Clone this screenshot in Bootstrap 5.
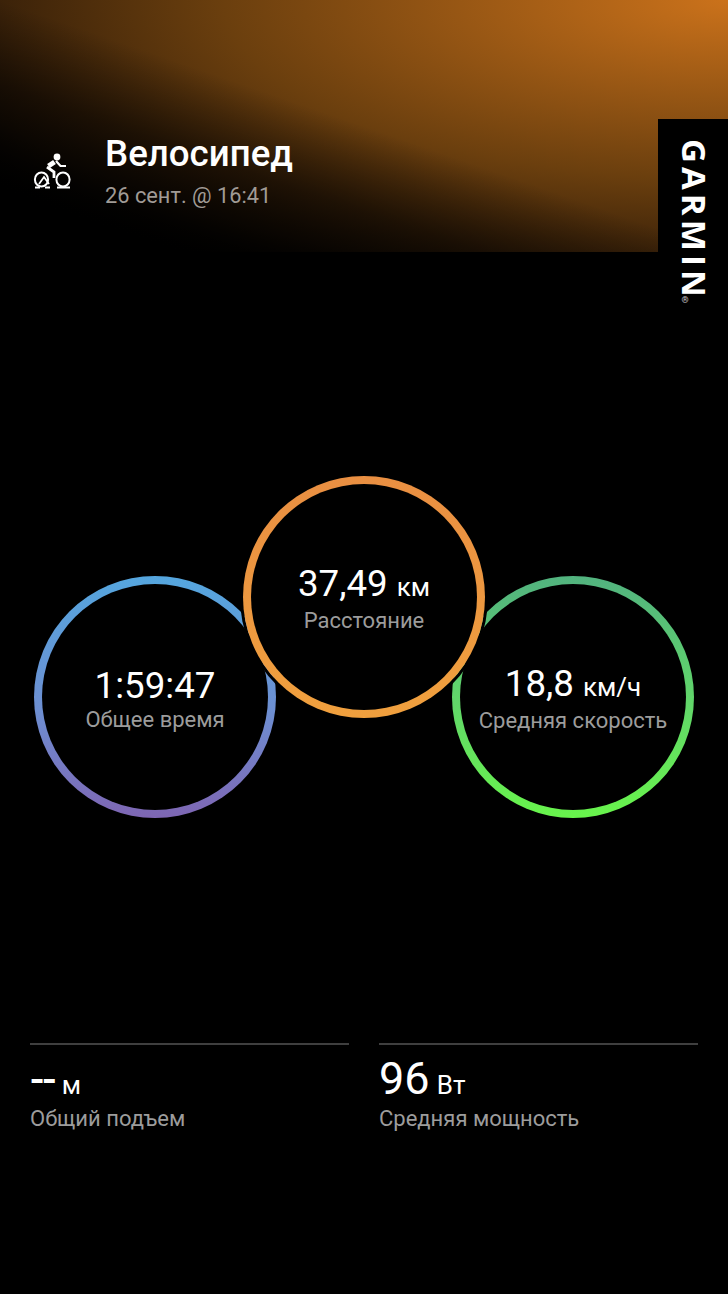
<!DOCTYPE html>
<html lang="ru">
<head>
  <meta charset="UTF-8">
  <meta name="viewport" content="width=device-width, initial-scale=1.0">
  <title>Велосипед</title>
  <link href="https://cdn.jsdelivr.net/npm/bootstrap@5.3.1/dist/css/bootstrap.min.css" rel="stylesheet">
  <style>
    body {
      background: #000;
      color: #fff;
      font-family: Roboto, "Liberation Sans", sans-serif;
      height: 1294px;
      overflow: hidden;
    }
    .hero {
      height: 252px;
      padding: 131px 0 0 30px;
      background:
        linear-gradient(to top right, #000 12%, rgba(0, 0, 0, .55) 33%, rgba(0, 0, 0, 0) 50%),
        radial-gradient(ellipse 900px 319px at 100% 0, #cb721b 0, #6b3f0e 56%, #3b2209 81%, #2a1807 89%, #000 100%);
    }
    .bike-icon { margin-top: 17px; }
    .hero-text { margin-left: 29px; }
    .hero-title {
      font-size: 36.7px;
      font-weight: 500;
      line-height: 46px;
    }
    .hero-date {
      font-size: 21.8px;
      line-height: 30px;
      margin-top: 4px;
      color: #a09b96;
    }
    .brand-box {
      top: 119px;
      right: 0;
      width: 70px;
      height: 190px;
      background: #000;
      padding: 20px 0 0 20px;
    }
    .brand-name {
      writing-mode: vertical-rl;
      font-family: "Open Sans", sans-serif;
      font-size: 33px;
      font-weight: 700;
      line-height: 32px;
      letter-spacing: 4.1px;
    }
    .brand-mark {
      writing-mode: vertical-rl;
      font-size: 9px;
      line-height: 9px;
      color: #ccc;
      left: 22px;
      top: 176px;
    }
    .rings {
      margin-top: 224px;
      height: 342px;
    }
    .ring {
      width: 242px;
      height: 242px;
      padding: 8px;
      border-radius: 50%;
      flex: none;
    }
    .ring-inner {
      width: 100%;
      height: 100%;
      border-radius: 50%;
      background: #000;
      padding-top: 5px;
    }
    .ring-side { margin-top: 100px; }
    .ring-time { background: linear-gradient(#55a6de, #6d8fd2 55%, #7e66b3); margin-left: 34px; }
    .ring-dist {
      background: linear-gradient(#e98f42, #f0a03e);
      margin: 0 -33px;
      box-shadow: 0 0 0 3px #000;
      position: relative;
    }
    .ring-speed { background: linear-gradient(#52b37f, #62d868 55%, #68f44c); }
    .ring-value {
      font-size: 36.7px;
      line-height: 40px;
      white-space: nowrap;
    }
    .ring-unit { font-size: 26px; }
    .ring-label {
      font-size: 22px;
      line-height: 28px;
      color: #9c9c9c;
      white-space: nowrap;
    }
    .stats {
      margin-top: 225px;
      padding: 0 30px;
      gap: 30px;
    }
    .stat {
      border-top: 2px solid #3f3f3f;
      padding-top: 14px;
    }
    .stat-value {
      font-size: 45px;
      line-height: 40px;
      word-spacing: -4px;
    }
    .stat-dash {
      font-size: 42px;
      letter-spacing: -2px;
      font-weight: 500;
    }
    .stat-unit { font-size: 26px; }
    .stat-label {
      font-size: 22px;
      line-height: 28px;
      color: #9c9c9c;
    }
  </style>
</head>
<body>
  <!-- Шапка -->
  <header class="hero d-flex">
    <svg class="bike-icon flex-shrink-0" width="46" height="46" viewBox="30 148 46 46" fill="none" stroke="#fff">
      <circle cx="57" cy="157" r="3.400" fill="#fff" stroke="none"/>
      <path d="M48.500 166L54.500 162" stroke-width="5"/>
      <path d="M56 161l4.500 5H66" stroke-width="2.200"/>
      <path d="M47 167l7 5v6" stroke-width="2.800"/>
      <ellipse cx="41.500" cy="179.500" rx="6.600" ry="7" stroke-width="2"/>
      <ellipse cx="63" cy="179.500" rx="6.600" ry="7" stroke-width="2"/>
      <path d="M39 184l5-7 5 7" stroke-width="1.800"/>
      <path d="M35 187.500h5M45 187.500h5M57 187.500h13" stroke-width="2"/>
    </svg>
    <div class="hero-text">
      <div class="hero-title">Велосипед</div>
      <div class="hero-date">26 сент. @ 16:41</div>
    </div>
  </header>

  <!-- Логотип -->
  <div class="brand-box position-absolute">
    <div class="brand-name">GARMIN</div>
    <div class="brand-mark position-absolute">®</div>
  </div>

  <!-- Кольца -->
  <section class="rings d-flex align-items-start">
    <div class="ring ring-side ring-time">
      <div class="ring-inner d-flex flex-column align-items-center justify-content-center">
        <div class="ring-value">1:59:47</div>
        <div class="ring-label">Общее время</div>
      </div>
    </div>
    <div class="ring ring-dist">
      <div class="ring-inner d-flex flex-column align-items-center justify-content-center">
        <div class="ring-value">37,49 <span class="ring-unit">км</span></div>
        <div class="ring-label">Расстояние</div>
      </div>
    </div>
    <div class="ring ring-side ring-speed">
      <div class="ring-inner d-flex flex-column align-items-center justify-content-center">
        <div class="ring-value">18,8 <span class="ring-unit">км/ч</span></div>
        <div class="ring-label">Средняя скорость</div>
      </div>
    </div>
  </section>

  <!-- Нижние показатели -->
  <section class="stats d-flex">
    <div class="stat w-50">
      <div class="stat-value"><span class="stat-dash">--</span> <span class="stat-unit">м</span></div>
      <div class="stat-label">Общий подъем</div>
    </div>
    <div class="stat w-50">
      <div class="stat-value">96 <span class="stat-unit">Вт</span></div>
      <div class="stat-label">Средняя мощность</div>
    </div>
  </section>

  <script src="https://cdn.jsdelivr.net/npm/bootstrap@5.3.1/dist/js/bootstrap.bundle.min.js"></script>
</body>
</html>
